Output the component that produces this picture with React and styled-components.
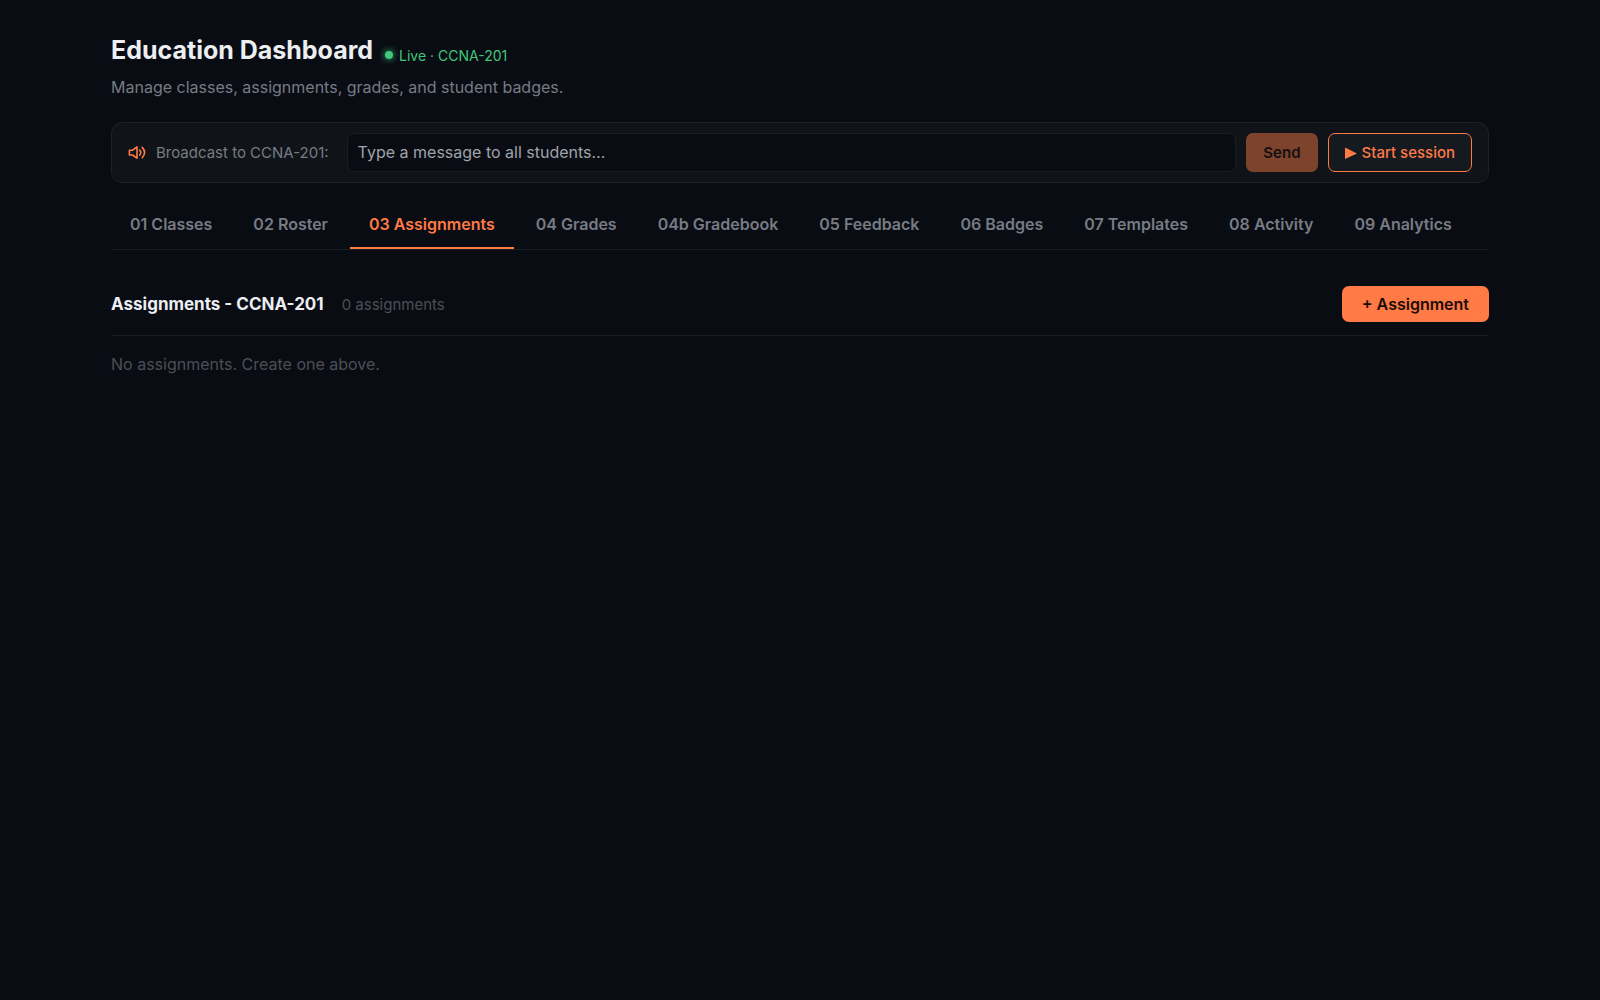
import { useState } from "react";
import styled, { createGlobalStyle } from "styled-components";

const tabs = [
  "01 Classes",
  "02 Roster",
  "03 Assignments",
  "04 Grades",
  "04b Gradebook",
  "05 Feedback",
  "06 Badges",
  "07 Templates",
  "08 Activity",
  "09 Analytics",
];

const App = () => {
  const [activeTab, setActiveTab] = useState("03 Assignments");
  const [message, setMessage] = useState("");

  return (
    <>
      <GlobalStyle />
      <Page>
        <TitleRow>
          <Title>Education Dashboard</Title>
          <Live>
            <LiveDot />
            Live · CCNA-201
          </Live>
        </TitleRow>
        <Subtitle>
          Manage classes, assignments, grades, and student badges.
        </Subtitle>

        <Broadcast onSubmit={(e) => e.preventDefault()}>
          <SpeakerIcon viewBox="0 0 18 18" aria-hidden="true">
            <path d="M1.4 6.2H4.6L9 2.8V14.2L4.6 11H1.4Z" />
            <path d="M11.7 6Q13.9 8.5 11.7 11.1" />
            <path d="M14.2 3.4Q19 8.5 14.2 13.7" />
          </SpeakerIcon>
          <BroadcastLabel htmlFor="broadcast">
            Broadcast to CCNA-201:
          </BroadcastLabel>
          <MessageInput
            id="broadcast"
            type="text"
            placeholder="Type a message to all students…"
            value={message}
            onChange={(e) => setMessage(e.target.value)}
          />
          <SendButton type="submit" disabled={!message}>
            Send
          </SendButton>
          <SessionButton type="button">
            <PlayIcon viewBox="0 0 12 12" aria-hidden="true">
              <path d="M0 0.5L12 6.5L0 12Z" />
            </PlayIcon>
            Start session
          </SessionButton>
        </Broadcast>

        <TabBar>
          {tabs.map((tab) => (
            <Tab
              key={tab}
              type="button"
              $active={tab === activeTab}
              onClick={() => setActiveTab(tab)}
            >
              {tab}
            </Tab>
          ))}
        </TabBar>

        <SectionHeader>
          <SectionTitle>Assignments - CCNA-201</SectionTitle>
          <Count>0 assignments</Count>
          <AddButton type="button">+ Assignment</AddButton>
        </SectionHeader>
        <Empty>No assignments. Create one above.</Empty>
      </Page>
    </>
  );
};

export default App;

const GlobalStyle = createGlobalStyle`
  * {
    box-sizing: border-box;
  }
  body {
    margin: 0;
    background: #090c13;
    color: #eceef2;
    font-family: Inter, "Liberation Sans", sans-serif;
  }
  button,
  input {
    font-family: inherit;
  }
`;

const Page = styled.main`
  max-width: 1426px;
  margin: 0 auto;
  padding: 32px 24px;
`;

const TitleRow = styled.header`
  display: flex;
  align-items: baseline;
  gap: 12px;
`;

const Title = styled.h1`
  margin: 0;
  font-size: 25px;
  line-height: 36px;
  font-weight: 700;
`;

const Live = styled.span`
  display: flex;
  align-items: center;
  gap: 6px;
  color: #41c77c;
  font-size: 14px;
`;

const LiveDot = styled.span`
  width: 8px;
  height: 8px;
  border-radius: 50%;
  background: #41c77c;
  box-shadow: 0 0 7px #41c77c;
`;

const Subtitle = styled.p`
  margin: 7px 0 23px;
  color: #777b84;
  font-size: 16px;
  line-height: 24px;
`;

const Broadcast = styled.form`
  display: flex;
  align-items: center;
  gap: 10px;
  padding: 10px 16px;
  border: 1px solid #1e2125;
  border-radius: 11px;
  background: #101419;
`;

const SpeakerIcon = styled.svg`
  width: 18px;
  height: 18px;
  fill: none;
  stroke: #ff7a45;
  stroke-width: 1.6;
  stroke-linecap: round;
  stroke-linejoin: round;
`;

const BroadcastLabel = styled.label`
  margin-right: 8px;
  color: #777b84;
  font-size: 15px;
`;

const MessageInput = styled.input`
  flex: 1;
  min-width: 0;
  height: 39px;
  padding: 0 10px 2px;
  border: 1px solid #1a1d21;
  border-radius: 7px;
  background: #090c13;
  color: #eceef2;
  font-size: 16px;

  &::placeholder {
    color: #a0a3a9;
    opacity: 1;
  }
`;

const SendButton = styled.button`
  height: 39px;
  padding: 0 17px;
  border: 0;
  border-radius: 7px;
  background: #ff7a45;
  color: #160a06;
  font-size: 15px;
  font-weight: 600;

  &:disabled {
    opacity: 0.46;
  }
`;

const SessionButton = styled.button`
  display: flex;
  align-items: center;
  gap: 5px;
  height: 39px;
  padding: 0 16px;
  border: 1px solid #ff7a45;
  border-radius: 7px;
  background: #141a20;
  color: #ff7a45;
  font-size: 15px;
  font-weight: 500;
`;

const PlayIcon = styled.svg`
  width: 12px;
  height: 12px;
  fill: currentColor;
`;

const TabBar = styled.nav`
  display: flex;
  gap: 3px;
  margin-top: 18px;
  border-bottom: 1px solid #1b1e23;
`;

const Tab = styled.button`
  height: 48px;
  padding: 0 19px;
  border: 0;
  border-bottom: 2px solid
    ${(props) => (props.$active ? "#ff7a45" : "transparent")};
  background: none;
  color: ${(props) => (props.$active ? "#ff7a45" : "#777b84")};
  font-size: 16px;
  font-weight: 600;
  white-space: nowrap;
`;

const SectionHeader = styled.div`
  display: flex;
  align-items: center;
  gap: 18px;
  margin-top: 36px;
  padding-bottom: 13px;
  border-bottom: 1px solid #1b1e23;
`;

const SectionTitle = styled.h2`
  margin: 0;
  font-size: 17px;
  font-weight: 700;
`;

const Count = styled.span`
  color: #4c4f56;
  font-size: 15px;
`;

const AddButton = styled.button`
  height: 36px;
  margin-left: auto;
  padding: 0 20px;
  border: 0;
  border-radius: 7px;
  background: #ff7a45;
  color: #1c0c06;
  font-size: 16px;
  font-weight: 600;
`;

const Empty = styled.p`
  margin: 16px 0 0;
  color: #4c4f56;
  font-size: 16px;
  line-height: 24px;
`;
